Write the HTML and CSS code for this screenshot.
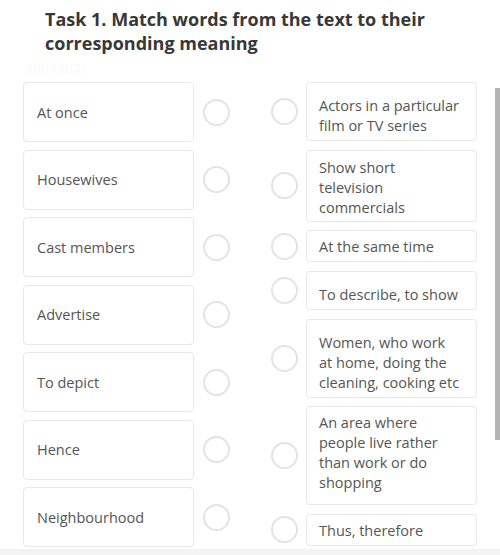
FILE: index.html
```html
<!DOCTYPE html>
<html>
<head>
   <title>Task 1</title>
   <link rel="stylesheet" href="styles.css">
</head>
<body>
   <!-- 과제 제목 -->
   <h1 class="task-title">Task 1. Match words from the text to their corresponding meaning</h1>
   <div class="stamp">30042021</div>

   <div class="match-board">
       <!-- 왼쪽: 단어 -->
       <div class="word-column">
           <div class="match-row"><div class="card word-card">At once</div><span class="dot"></span></div>
           <div class="match-row"><div class="card word-card">Housewives</div><span class="dot"></span></div>
           <div class="match-row"><div class="card word-card">Cast members</div><span class="dot"></span></div>
           <div class="match-row"><div class="card word-card">Advertise</div><span class="dot"></span></div>
           <div class="match-row"><div class="card word-card">To depict</div><span class="dot"></span></div>
           <div class="match-row"><div class="card word-card">Hence</div><span class="dot"></span></div>
           <div class="match-row"><div class="card word-card">Neighbourhood</div><span class="dot"></span></div>
       </div>

       <!-- 오른쪽: 뜻 -->
       <div class="meaning-column">
           <div class="match-row"><span class="dot"></span><div class="card meaning-card pad-low">Actors in a particular<br>film or TV series</div></div>
           <div class="match-row"><span class="dot"></span><div class="card meaning-card pad-even">Show short<br>television<br>commercials</div></div>
           <div class="match-row"><span class="dot"></span><div class="card meaning-card pad-high">At the same time</div></div>
           <div class="match-row"><span class="dot"></span><div class="card meaning-card pad-low">To describe, to show</div></div>
           <div class="match-row"><span class="dot"></span><div class="card meaning-card pad-low">Women, who work<br>at home, doing the<br>cleaning, cooking etc</div></div>
           <div class="match-row"><span class="dot"></span><div class="card meaning-card pad-tall">An area where<br>people live rather<br>than work or do<br>shopping</div></div>
           <div class="match-row"><span class="dot"></span><div class="card meaning-card pad-high">Thus, therefore</div></div>
       </div>
   </div>

   <div class="scroll-thumb"></div>
</body>
</html>
```

FILE: styles.css
```css
/* 기본 페이지 */
body {
    margin: 0;
    background-color: #ffffff;
    font-family: "Open Sans", "Liberation Sans", sans-serif;
    color: #555555;
    position: relative;
    min-height: 555px;
    box-shadow: inset 0 -6px 0 #f3f3f3;
}

/* 제목 */
.task-title {
    margin: 7px 20px 0 45px;
    font-size: 18px;
    line-height: 24px;
    font-weight: 700;
    color: #383838;
}

/* 흐린 워터마크 */
.stamp {
    height: 27px;
    padding-left: 25px;
    font-size: 14px;
    line-height: 27px;
    color: #fafafa;
}

/* 두 열 배치 */
.match-board {
    display: flex;
    padding-left: 23px;
}

.word-column {
    width: 207px;
    display: flex;
    flex-direction: column;
    gap: 7.5px;
}

.meaning-column {
    margin-left: 41px;
    width: 206px;
    display: flex;
    flex-direction: column;
    gap: 8.66px;
}

.match-row {
    display: flex;
    align-items: center;
    gap: 8px;
}

/* 카드 */
.card {
    width: 171px;
    box-sizing: border-box;
    border: 1px solid #e8e8e8;
    border-radius: 4px;
    background-color: #ffffff;
    font-size: 14.5px;
    line-height: 20px;
    white-space: nowrap;
}

.word-card {
    height: 60px;
    padding: 1px 8px 0 13px;
    display: flex;
    align-items: center;
}

.word-column .match-row {
    gap: 9px;
}

.meaning-card {
    padding-left: 12px;
    padding-right: 4px;
}

.pad-low { padding-top: 13px; padding-bottom: 4px; }
.pad-even { padding-top: 7px; padding-bottom: 3px; }
.pad-high { padding-top: 6px; padding-bottom: 4px; }
.pad-tall { padding-top: 6px; padding-bottom: 11px; }

/* 동그라미 */
.dot {
    width: 27px;
    height: 27px;
    box-sizing: border-box;
    border: 2px solid #e3e3e3;
    border-radius: 50%;
    flex-shrink: 0;
}

/* 스크롤 표시 */
.scroll-thumb {
    position: absolute;
    top: 88px;
    right: 0;
    width: 5px;
    height: 352px;
    background-color: #b3b3b3;
}
```
